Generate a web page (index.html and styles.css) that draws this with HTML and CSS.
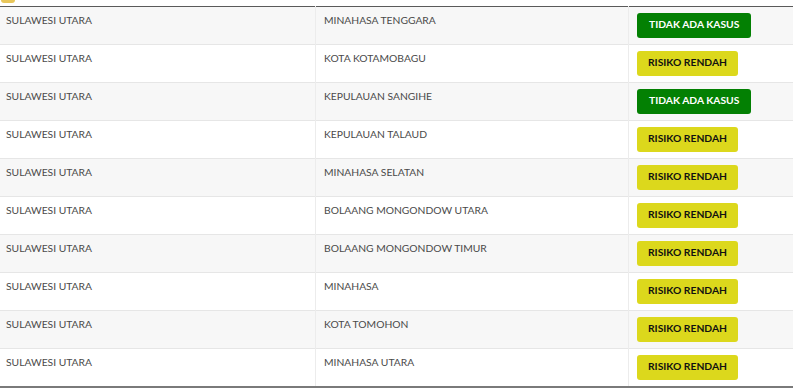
FILE: index.html
```html
<!DOCTYPE html>
<html>
<head>
<meta charset="utf-8">
<link rel="stylesheet" href="styles.css">
</head>
<body>
<div class="page">
  <div class="peek"></div>
  <table class="grid">
    <tbody>
      <tr><td class="c1">SULAWESI UTARA</td><td class="c2">MINAHASA TENGGARA</td><td class="c3"><span class="badge green">TIDAK ADA KASUS</span></td></tr>
      <tr><td class="c1">SULAWESI UTARA</td><td class="c2">KOTA KOTAMOBAGU</td><td class="c3"><span class="badge yellow">RISIKO RENDAH</span></td></tr>
      <tr><td class="c1">SULAWESI UTARA</td><td class="c2">KEPULAUAN SANGIHE</td><td class="c3"><span class="badge green">TIDAK ADA KASUS</span></td></tr>
      <tr><td class="c1">SULAWESI UTARA</td><td class="c2">KEPULAUAN TALAUD</td><td class="c3"><span class="badge yellow">RISIKO RENDAH</span></td></tr>
      <tr><td class="c1">SULAWESI UTARA</td><td class="c2">MINAHASA SELATAN</td><td class="c3"><span class="badge yellow">RISIKO RENDAH</span></td></tr>
      <tr><td class="c1">SULAWESI UTARA</td><td class="c2">BOLAANG MONGONDOW UTARA</td><td class="c3"><span class="badge yellow">RISIKO RENDAH</span></td></tr>
      <tr><td class="c1">SULAWESI UTARA</td><td class="c2">BOLAANG MONGONDOW TIMUR</td><td class="c3"><span class="badge yellow">RISIKO RENDAH</span></td></tr>
      <tr><td class="c1">SULAWESI UTARA</td><td class="c2">MINAHASA</td><td class="c3"><span class="badge yellow">RISIKO RENDAH</span></td></tr>
      <tr><td class="c1">SULAWESI UTARA</td><td class="c2">KOTA TOMOHON</td><td class="c3"><span class="badge yellow">RISIKO RENDAH</span></td></tr>
      <tr><td class="c1">SULAWESI UTARA</td><td class="c2">MINAHASA UTARA</td><td class="c3"><span class="badge yellow">RISIKO RENDAH</span></td></tr>
    </tbody>
  </table>
</div>
</body>
</html>
```
FILE: styles.css
```css
html, body {
  margin: 0;
  padding: 0;
  background: #ffffff;
}
body {
  font-family: Lato, "Open Sans", sans-serif;
  color: #4a4a4a;
  width: 800px;
  height: 388px;
  overflow: hidden;
}
.page {
  width: 793px;
}
.peek {
  width: 14px;
  height: 3px;
  margin-left: 1px;
  margin-bottom: 3px;
  background: #e8c65a;
  border-radius: 0 0 4px 4px;
}
.grid {
  width: 793px;
  border-collapse: collapse;
  table-layout: fixed;
  border-top: 1px solid #5a5a5a;
  border-bottom: 2px solid #7a7a7a;
}
.grid tr {
  height: 38px;
}
.grid tr:nth-child(odd) td {
  background: #f7f7f7;
}
.grid td {
  vertical-align: top;
  padding: 7px 8px 0 8px;
  font-size: 10.3px;
  line-height: 13px;
  border-top: 1px solid #e6e6e6;
}
.grid tr:first-child td {
  border-top: none;
}
.c1 {
  width: 301px;
  padding-left: 6px !important;
}
.c2 {
  width: 296px;
  border-left: 1px solid #ececec;
}
.c3 {
  border-left: 1px solid #ececec;
  padding-top: 6px !important;
}
.badge {
  display: inline-block;
  height: 25px;
  line-height: 23px;
  padding: 0 12px;
  border-radius: 3px;
  font-size: 10.3px;
  font-weight: 700;
}
.yellow {
  padding: 0 11px;
}
.green {
  background: #038003;
  color: #ffffff;
}
.yellow {
  background: #dcd81c;
  color: #111111;
}
```
